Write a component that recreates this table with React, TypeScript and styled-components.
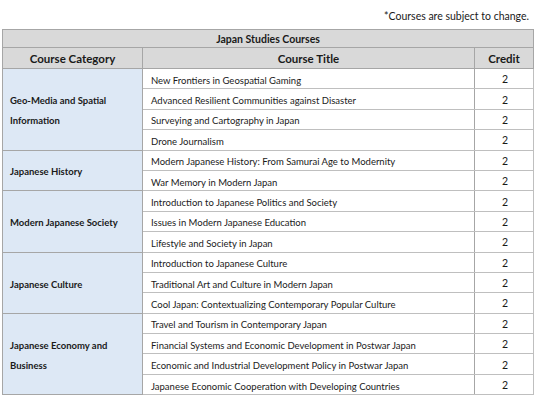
import React from 'react';
import styled, { createGlobalStyle } from 'styled-components';

const GlobalStyle = createGlobalStyle`
  body {
    margin: 0;
    background: #ffffff;
    font-family: 'Lato', 'Liberation Sans', sans-serif;
    color: #1a1a1a;
  }
`;

const Page = styled.div`
  display: flex;
  flex-direction: column;
  width: 531px;
  padding: 8px 0 0 2px;
`;

const Note = styled.div`
  align-self: flex-end;
  font-size: 10.5px;
  height: 21px;
  line-height: 16px;
  padding-right: 4px;
`;

const Table = styled.table`
  border-collapse: collapse;
  width: 531px;
  table-layout: fixed;
  border: 1px solid #a6a6a6;
`;

const Col = styled.col<{ $w: number }>`
  width: ${(p) => p.$w}px;
`;

const Row = styled.tr<{ $h: number }>`
  height: ${(p) => p.$h}px;
`;

const TitleCell = styled.th`
  background: #d9d9d9;
  font-size: 10.5px;
  font-weight: 700;
  line-height: 12px;
  text-align: center;
  border: 1px solid #a6a6a6;
  padding: 0;
`;

const HeadCell = styled.th`
  background: #d9d9d9;
  font-size: 11.5px;
  font-weight: 700;
  line-height: 12px;
  text-align: center;
  border: 1px solid #a6a6a6;
  padding: 1px 0 0;
`;

const CategoryCell = styled.td`
  background: #dde8f5;
  font-size: 9.5px;
  font-weight: 700;
  line-height: 20px;
  padding: 4px 12px 0 7px;
  border: 1px solid #a6a6a6;
  vertical-align: middle;
`;

const CourseCell = styled.td`
  font-size: 9.5px;
  line-height: 12px;
  padding: 4px 8px 0;
  border: 1px solid #bfbfbf;
  border-left-color: #a6a6a6;
  border-right-color: #a6a6a6;
  white-space: nowrap;
  overflow: hidden;
`;

const CreditCell = styled.td`
  font-size: 10.5px;
  line-height: 12px;
  text-align: center;
  padding: 1px 0 0 2px;
  border: 1px solid #bfbfbf;
  border-left-color: #a6a6a6;
`;

const groups = [
  {
    name: 'Geo-Media and Spatial Information',
    courses: [
      'New Frontiers in Geospatial Gaming',
      'Advanced Resilient Communities against Disaster',
      'Surveying and Cartography in Japan',
      'Drone Journalism',
    ],
  },
  {
    name: 'Japanese History',
    courses: [
      'Modern Japanese History: From Samurai Age to Modernity',
      'War Memory in Modern Japan',
    ],
  },
  {
    name: 'Modern Japanese Society',
    courses: [
      'Introduction to Japanese Politics and Society',
      'Issues in Modern Japanese Education',
      'Lifestyle and Society in Japan',
    ],
  },
  {
    name: 'Japanese Culture',
    courses: [
      'Introduction to Japanese Culture',
      'Traditional Art and Culture in Modern Japan',
      'Cool Japan: Contextualizing Contemporary Popular Culture',
    ],
  },
  {
    name: 'Japanese Economy and Business',
    courses: [
      'Travel and Tourism in Contemporary Japan',
      'Financial Systems and Economic Development in Postwar Japan',
      'Economic and Industrial Development Policy in Postwar Japan',
      'Japanese Economic Cooperation with Developing Countries',
    ],
  },
];

function App() {
  return (
    <>
      <GlobalStyle />
      <Page>
        <Note>*Courses are subject to change.</Note>
        <Table>
          <colgroup>
            <Col $w={140} />
            <Col $w={332} />
            <Col $w={59} />
          </colgroup>
          <thead>
            <Row $h={18}>
              <TitleCell colSpan={3}>Japan Studies Courses</TitleCell>
            </Row>
            <Row $h={21}>
              <HeadCell>Course Category</HeadCell>
              <HeadCell>Course Title</HeadCell>
              <HeadCell>Credit</HeadCell>
            </Row>
          </thead>
          <tbody>
            {groups.map((group) =>
              group.courses.map((course, i) => (
                <Row $h={20.4} key={course}>
                  {i === 0 && (
                    <CategoryCell rowSpan={group.courses.length}>
                      {group.name}
                    </CategoryCell>
                  )}
                  <CourseCell>{course}</CourseCell>
                  <CreditCell>2</CreditCell>
                </Row>
              ))
            )}
          </tbody>
        </Table>
      </Page>
    </>
  );
}

export default App;
